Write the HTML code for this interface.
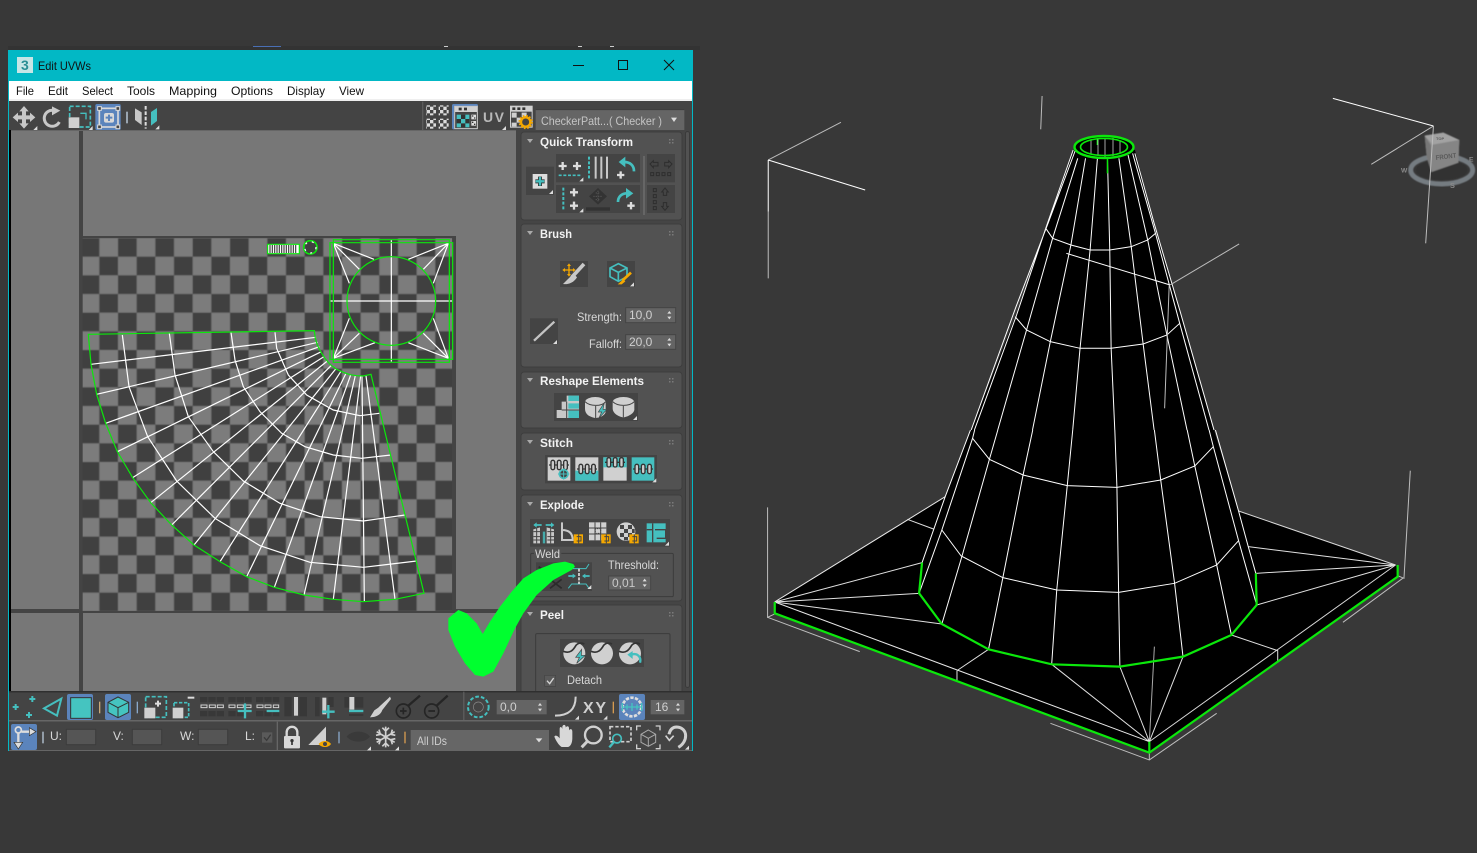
<!DOCTYPE html>
<html><head><meta charset="utf-8"><title>Edit UVWs</title>
<style>
html,body{margin:0;padding:0;background:#383838;width:1477px;height:853px;overflow:hidden}
svg{position:absolute;left:0;top:0;display:block}
text{font-family:"Liberation Sans",sans-serif;font-size:12px}
.w{fill:#f2f2f2;font-weight:bold}
.l{fill:#d8d8d8}
.v *{vector-effect:non-scaling-stroke}
</style></head><body>
<svg width="1477" height="853" viewBox="0 0 1477 853" xmlns="http://www.w3.org/2000/svg">
<defs>
<filter id="soft" x="-5%" y="-5%" width="110%" height="110%"><feGaussianBlur stdDeviation=".45"/></filter>
<filter id="soft2" x="-5%" y="-5%" width="110%" height="110%"><feGaussianBlur stdDeviation="1.800"/></filter>
<clipPath id="cc"><rect x="82.670" y="238" width="369.400" height="373"/></clipPath>
<pattern id="chk" x="80.67" y="238" width="37.33" height="37.33" patternUnits="userSpaceOnUse">
<rect width="37.33" height="37.33" fill="#7c7c7c"/><rect width="18.67" height="18.67" fill="#3f3f3f"/><rect x="18.67" y="18.67" width="18.67" height="18.67" fill="#3f3f3f"/>
</pattern>
<pattern id="mini" width="20" height="20" patternUnits="userSpaceOnUse">
<rect width="10" height="10" fill="#ddd"/><rect x="10" y="10" width="10" height="10" fill="#ddd"/>
</pattern>
<polygon id="t" points="0,12 12,12 12,0" fill="#ddd"/>
<g id="chain" fill="none" stroke="#333" stroke-width="4"><path d="M0 30H60"/><rect x="6" y="16" width="11" height="28" rx="5" fill="#ccc"/><rect x="25" y="16" width="11" height="28" rx="5" fill="#ccc"/><rect x="44" y="16" width="11" height="28" rx="5" fill="#ccc"/></g>
</defs>

<!-- top strip -->
<rect x="8" y="46" width="692" height="4" fill="#333"/>
<rect x="253" y="46" width="28" height="1" fill="#4a6fb5"/>
<rect x="444" y="46" width="4" height="1" fill="#ccc"/><rect x="578" y="46" width="4" height="1" fill="#ccc"/><rect x="610" y="46" width="4" height="1" fill="#ccc"/>

<!-- viewcube -->
<g transform="translate(1400 120) scale(.33333)">
<g filter="url(#soft2)">
<ellipse cx="125" cy="150" rx="93" ry="42" fill="none" stroke="#757b81" stroke-width="15"/>
<ellipse cx="125" cy="150" rx="78" ry="30" fill="#333"/>
<polygon points="74,47 130,38 178,60 175,128 94,156 80,110" fill="#8f8f8f"/>
<polygon points="74,47 130,38 178,60 100,75" fill="#a2a2a2"/>
<polygon points="92,75 178,60 175,128 94,156" fill="#858585"/>
<polygon points="74,47 92,75 94,156 80,110" fill="#777"/>
</g>
<text x="108" y="120" style="font-size:20px;font-weight:bold" fill="#5a5a5a" textLength="62" lengthAdjust="spacingAndGlyphs" transform="rotate(-7 108 120)">FRONT</text>
<text x="108" y="60" style="font-size:12px;font-weight:bold" fill="#5a5a5a">TOP</text>
<text x="3" y="158" style="font-size:20px;font-weight:bold" fill="#8a8a8a">W</text>
<text x="207" y="124" style="font-size:20px;font-weight:bold" fill="#8a8a8a">E</text>
<text x="150" y="204" style="font-size:22px;font-weight:bold" fill="#8a8a8a">S</text>
</g>

<!-- 3D viewport -->
<polygon points="775,602 945,497 973,425 1015,317 1046,228 1073,150 1135,150 1154,223 1180,310 1214,430 1239,511 1396,565 1398,577 1149,753 775,613" fill="#000"/>
<ellipse cx="1104" cy="147" rx="29.500" ry="11" fill="#000"/>
<g class="v" transform="translate(760 430) scale(.4209 .3333)" fill="none" stroke="#fff" stroke-width="1">
<path d="M35 516L925 935M35 516L440 200" stroke="#e8e8e8"/>
<path d="M925 935L1510 405M1137 243L1510 405" stroke="#d8d8d8"/>
<path d="M18 232V562L35 552M18 562L237 665M690 880L925 990L1085 850M925 990V968M1527 445L1385 577M1545 122L1530 445L1515 437" stroke="#bdbdbd"/>
<path d="M937 650L925 935" stroke="#aaa"/>
<path d="M35 516L385 398M35 516L378 490M35 516L432 582M1510 405L1160 350M1510 405L1178 430M1510 405L1180 525M925 935L693 703M925 935L855 710M925 935L1005 680M350 268L412 297M468 722L543 658M468 722V755M1120 615L1230 662V695" stroke="#e0e0e0"/>
<path d="M505 25L545 88L625 135L730 167L848 172L952 150L1033 108L1077 50M432 300L478 378L577 443L705 480L852 487L985 460L1085 405L1137 332"/>
<path d="M378 490L432 300L505 25L510 0M432 582L480 378L545 88L565 0M543 658L577 443L625 135L648 0M693 703L705 480L730 167L743 0M855 710L852 487L848 172L843 0M1005 680L985 460L952 150L937 0M1120 615L1085 405L1033 108L1015 0M1180 525L1137 332L1077 50L1067 0M385 398L440 200L500 0M1178 430L1160 350L1137 243L1082 0"/>
<path d="M35 516V550L925 968L1515 440V405M925 935V968M385 398L378 490L432 582L543 658L693 703L855 710L1005 680L1120 615L1180 525L1178 430" stroke="#0be80b" stroke-width="2.200"/>
</g>
<g class="v" transform="translate(760 90) scale(.4572 .3333)" fill="none" stroke="#fff" stroke-width="1">
<path d="M462 1020L560 650L630 400L690 180M469 1020L560 680L625 415L685 180M520 1020L583 720L640 445L695 205M596 1020L635 755L680 465L712 205M684 1020L700 775L722 480L738 205M776 1020L768 775L765 480L760 205M862 1020L838 762L812 470L785 205M934 1020L890 735L848 450L805 195M982 1020L918 700L865 430L815 190M993 1020L918 660L862 400L820 190"/>
<path d="M625 415L640 445L680 465L722 480L765 480L812 470L848 450L865 430M558 680L583 720L635 755L700 775L768 775L838 762L890 735L918 700M670 490L897 585"/>
<path d="M897 585L1048 462M895 585L885 955M617 18L614 118M18 210L177 97M18 365V565M1473 108L1337 223M1473 108L1456 460" stroke="#bcbcbc"/>
<path d="M18 210L230 300M18 210V365M1253 25L1473 108"/>
<path d="M760 205V250M738 145V165" stroke="#0be80b" stroke-width="1.500"/>
</g>
<path d="M1091 140V154M1098 138V156M1105 138V157M1113 138V156M1120 141V153" stroke="#fff" stroke-width=".8" opacity=".8"/>
<ellipse cx="1104" cy="147" rx="29.500" ry="11" fill="none" stroke="#0be80b" stroke-width="2.400"/>
<ellipse cx="1104" cy="147" rx="23.500" ry="8.500" fill="none" stroke="#0be80b" stroke-width="1.600"/>

<!-- window -->
<rect x="8" y="50" width="685" height="701" fill="#464646"/>
<rect x="8" y="50" width="685" height="31" fill="#02b8c5"/>
<rect x="8" y="81" width="684" height="20" fill="#fff"/>
<rect x="9" y="99" width="683" height="2" fill="#efefef"/>
<rect x="17" y="57" width="16" height="16" fill="#c8e6e6"/>
<text x="21" y="70" style="font-size:14px;font-weight:bold" fill="#2a8f94">3</text>
<text x="38" y="70" fill="#111" textLength="53" lengthAdjust="spacingAndGlyphs">Edit UVWs</text>
<path d="M573 65.500H584" stroke="#111"/>
<rect x="618.500" y="60.500" width="9" height="9" fill="none" stroke="#111"/>
<path d="M664 60L674 70M674 60L664 70" stroke="#111"/>
<g fill="#111">
<text x="16" y="95" textLength="18" lengthAdjust="spacingAndGlyphs">File</text>
<text x="48" y="95" textLength="20" lengthAdjust="spacingAndGlyphs">Edit</text>
<text x="82" y="95" textLength="31" lengthAdjust="spacingAndGlyphs">Select</text>
<text x="127" y="95" textLength="28" lengthAdjust="spacingAndGlyphs">Tools</text>
<text x="169" y="95" textLength="48" lengthAdjust="spacingAndGlyphs">Mapping</text>
<text x="231" y="95" textLength="42" lengthAdjust="spacingAndGlyphs">Options</text>
<text x="287" y="95" textLength="38" lengthAdjust="spacingAndGlyphs">Display</text>
<text x="339" y="95" textLength="25" lengthAdjust="spacingAndGlyphs">View</text>
</g>

<!-- canvas -->
<rect x="9" y="130" width="508" height="561" fill="#777"/>
<rect x="9" y="130" width="2" height="561" fill="#000"/>
<rect x="79" y="130" width="4" height="561" fill="#444"/>
<rect x="11" y="130" width="506" height="1" fill="#666"/>
<rect x="83" y="236" width="373" height="3" fill="#444"/>
<rect x="11" y="609" width="506" height="4" fill="#444"/>
<rect x="80" y="236" width="376" height="377" fill="#444"/>
<g clip-path="url(#cc)"><rect x="80" y="236" width="374" height="377" fill="url(#chk)" filter="url(#soft)"/></g>

<!-- uv shells -->
<g class="v" transform="translate(80 235) scale(.33333)" fill="none" stroke="#fff" stroke-width="1.200">
<path d="M33 388L708 307M50 478L713 322M77 565L718 335M112 650L724 350M158 728L732 365M212 803L742 378M275 870L753 392M342 930L767 402M420 980L782 410M500 1025L797 417M583 1057L812 420M672 1080L826 422M760 1093L842 422M853 1098L846 422M945 1093L858 422"/>
<path d="M585 292L590 340L625 420L680 480L760 525L840 542L898 535M453 292L465 375L490 455L540 530L605 595L675 635L760 660L845 670L933 660M268 295L285 420L325 545L400 650L490 738L600 805L720 845L850 858L975 840M127 300L147 455L203 605L290 738L405 850L540 932L690 982L850 997L1010 978"/>
<path d="M934 14V380M750 198H1118M760 25L882 73M760 25L838 103M760 25L808 145M1105 25L985 73M1105 25L1030 103M1105 25L1060 145M760 370L808 250M760 370L838 295M760 370L885 323M1105 370L1060 250M1105 370L1030 295M1105 370L985 323"/>
<path d="M25 298L703 287L706 310L712 330L722 350L735 370L750 388L770 403L790 412L810 419L830 422L850 423L873 418L1032 1075L945 1093L850 1100L760 1093L672 1080L583 1057L500 1025L420 980L342 930L275 870L212 803L158 728L112 650L77 565L50 478L33 388Z" stroke="#0be80b"/>
<rect x="760" y="14" width="348" height="368" stroke="#0be80b"/>
<rect x="750" y="23" width="368" height="350" stroke="#0be80b"/>
<circle cx="934" cy="198" r="133" stroke="#0be80b"/>
<rect x="563" y="28" width="95" height="28" fill="#fff" stroke="#0be80b"/>
<path d="M570 30V54M577 30V54M584 30V54M591 30V54M598 30V54M605 30V54M612 30V54M619 30V54M626 30V54M633 30V54M640 30V54M647 30V54" stroke="#444" stroke-width="1.200"/>
<circle cx="691" cy="37" r="20" stroke="#0be80b" stroke-width="1.600"/>
<circle cx="691" cy="37" r="17" stroke="#fff" stroke-dasharray="2 5"/>
</g>

<!-- top toolbar -->
<rect x="9" y="101" width="683" height="29" fill="#444"/>
<g transform="translate(0 40) scale(.33333)">
<path d="M72 198L86 214H78V226H90V218L106 232L90 246V238H78V250H86L72 266L58 250H66V238H54V246L38 232L54 218V226H66V214H58Z" fill="#c8c8c8"/>
<use href="#t" x="100" y="258"/>
<path d="M178 246A24 24 0 1 1 160 211" fill="none" stroke="#c8c8c8" stroke-width="9"/>
<polygon points="156,199 156,226 181,212" fill="#c8c8c8"/>
<rect x="209" y="199" width="62" height="62" fill="none" stroke="#45bfbf" stroke-width="5" stroke-dasharray="12 6"/>
<rect x="206" y="232" width="32" height="32" fill="#d0d0d0"/>
<path d="M241 220H258V238" fill="none" stroke="#45bfbf" stroke-width="4"/>
<use href="#t" x="266" y="258"/>
<rect x="286" y="192" width="76" height="78" rx="5" fill="#5b84bc"/>
<rect x="298" y="205" width="56" height="56" fill="none" stroke="#d8d8d8" stroke-width="5"/>
<g fill="#444" stroke="#d8d8d8" stroke-width="3"><rect x="293" y="200" width="11" height="11"/><rect x="348" y="200" width="11" height="11"/><rect x="293" y="255" width="11" height="11"/><rect x="348" y="255" width="11" height="11"/></g>
<rect x="312" y="219" width="30" height="29" rx="6" fill="#d8d8d8"/>
<path d="M327 224V243M317 233H337" stroke="#5b84bc" stroke-width="6"/>
<rect x="378" y="215" width="6" height="35" fill="#9aa5b0"/>
<polygon points="405,205 425,217 425,255 405,240" fill="#c8c8c8"/>
<polygon points="453,216 471,204 471,243 453,257" fill="#45bfbf"/>
<path d="M437 198V266" stroke="#ddd" stroke-width="6" stroke-dasharray="11 5"/>
<use href="#t" x="466" y="256"/>
</g>
<g transform="translate(350 40) scale(.33333)">
<rect x="216" y="185" width="4" height="85" fill="#5c5c5c"/>
<g fill="url(#mini)"><rect x="228" y="196" width="30" height="30"/><rect x="266" y="196" width="30" height="30"/><rect x="228" y="236" width="30" height="30"/><rect x="266" y="236" width="30" height="30"/></g>
<rect x="306" y="192" width="78" height="76" rx="5" fill="#5b84bc"/>
<rect x="312" y="198" width="72" height="70" fill="#444"/>
<rect x="314" y="199" width="68" height="67" fill="none" stroke="#d0d0d0" stroke-width="3"/>
<rect x="315" y="200" width="66" height="16" fill="#d0d0d0"/>
<path d="M326 203h9v8h-9zM342 203h9v8h-9z" fill="#333"/>
<rect x="320" y="224" width="38" height="38" fill="#45bfbf"/>
<path d="M333 224h13v13h-13zM320 237h13v13h-13zM346 237h12v13h-12zM333 250h13v12h-13z" fill="#333"/>
<rect x="364" y="224" width="14" height="14" fill="#ddd"/><rect x="364" y="243" width="14" height="14" fill="#ddd"/>
<path d="M366 226h4v4h-4zM372 232h4v4h-4zM366 245h4v4h-4zM372 251h4v4h-4z" fill="#333"/>
<use href="#t" x="456" y="258"/>
<rect x="480" y="197" width="68" height="66" fill="#d0d0d0"/><rect x="483" y="215" width="62" height="45" fill="#444"/>
<path d="M487 202h9v8h-9zM502 202h9v8h-9zM517 202h9v8h-9z" fill="#333"/>
<path d="M485 218h15v15h-15zM515 218h15v13h-15zM500 233h15v15h-15zM485 248h15v12h-15z" fill="#d0d0d0"/>
<circle cx="527" cy="246" r="14" fill="none" stroke="#f5a800" stroke-width="7"/>
<circle cx="527" cy="246" r="19" fill="none" stroke="#f5a800" stroke-width="5" stroke-dasharray="5 5"/>
<rect x="557" y="209" width="446" height="61" fill="#656565"/>
<path d="M557 209H1003" stroke="#3e3e3e" stroke-width="3"/>
<polygon points="963,233 981,233 972,246" fill="#ddd"/>
</g>
<text x="483" y="122" style="font-size:14px;font-weight:bold" fill="#b8b8b8" textLength="21">UV</text>
<text x="541" y="125" fill="#c4c4c4" textLength="121" lengthAdjust="spacingAndGlyphs">CheckerPatt...( Checker )</text>

<!-- command panel -->
<rect x="516" y="130" width="176" height="561" fill="#454545"/>
<rect x="685.500" y="131.500" width="4" height="556" rx="2" fill="#525252" stroke="#3a3a3a"/>
<g fill="#525252" stroke="#3d3d3d">
<rect x="521" y="132" width="161" height="88" rx="3"/>
<rect x="521" y="224" width="161" height="143" rx="3"/>
<rect x="521" y="372" width="161" height="56" rx="3"/>
<rect x="521" y="433" width="161" height="57" rx="3"/>
<rect x="521" y="495" width="161" height="106" rx="3"/>
<rect x="521" y="605" width="161" height="95" rx="3"/>
</g>
<g fill="#aaa">
<polygon points="527,139 533,139 530,143"/><polygon points="527,231 533,231 530,235"/><polygon points="527,378 533,378 530,382"/><polygon points="527,440 533,440 530,444"/><polygon points="527,502 533,502 530,506"/><polygon points="527,612 533,612 530,616"/>
</g>
<g fill="#7a7a7a">
<path d="M669 139h1.500v1.500H669zM672 139h1.500v1.500H672zM669 142h1.500v1.500H669zM672 142h1.500v1.500H672z"/>
<path d="M669 231h1.500v1.500H669zM672 231h1.500v1.500H672zM669 234h1.500v1.500H669zM672 234h1.500v1.500H672z"/>
<path d="M669 378h1.500v1.500H669zM672 378h1.500v1.500H672zM669 381h1.500v1.500H669zM672 381h1.500v1.500H672z"/>
<path d="M669 440h1.500v1.500H669zM672 440h1.500v1.500H672zM669 443h1.500v1.500H669zM672 443h1.500v1.500H672z"/>
<path d="M669 502h1.500v1.500H669zM672 502h1.500v1.500H672zM669 505h1.500v1.500H669zM672 505h1.500v1.500H672z"/>
<path d="M669 612h1.500v1.500H669zM672 612h1.500v1.500H672zM669 615h1.500v1.500H669zM672 615h1.500v1.500H672z"/>
</g>
<text class="w" x="540" y="146" textLength="93" lengthAdjust="spacingAndGlyphs">Quick Transform</text>
<text class="w" x="540" y="238" textLength="32" lengthAdjust="spacingAndGlyphs">Brush</text>
<text class="w" x="540" y="385" textLength="104" lengthAdjust="spacingAndGlyphs">Reshape Elements</text>
<text class="w" x="540" y="447" textLength="33" lengthAdjust="spacingAndGlyphs">Stitch</text>
<text class="w" x="540" y="509" textLength="44" lengthAdjust="spacingAndGlyphs">Explode</text>
<text class="w" x="540" y="619" textLength="24" lengthAdjust="spacingAndGlyphs">Peel</text>

<!-- Quick transform icons -->
<g transform="translate(350 40) scale(.33333)">
<g fill="#444"><rect x="528" y="380" width="84" height="85"/><rect x="618" y="342" width="252" height="85"/><rect x="618" y="435" width="252" height="84"/><rect x="891" y="342" width="84" height="85"/><rect x="891" y="435" width="84" height="84"/></g>
<rect x="879" y="348" width="6" height="177" fill="#666"/>
<rect x="548" y="402" width="44" height="44" fill="#ddd"/>
<path d="M570 410V438M556 424H584" stroke="#333" stroke-width="12"/><path d="M570 411V437M557 424H583" stroke="#45bfbf" stroke-width="7"/>
<use href="#t" x="597" y="450"/>
<path d="M638 366V390M626 378H650M681 366V390M669 378H693M672 445V469M660 457H684M672 485V509M660 497H684M812 394V416M801 405H823M843 486V508M832 497H854" stroke="#ddd" stroke-width="7"/>
<path d="M626 406H694" stroke="#45bfbf" stroke-width="5" stroke-dasharray="9 5"/>
<use href="#t" x="688" y="412"/>
<path d="M717 350V418" stroke="#45bfbf" stroke-width="6" stroke-dasharray="9 5"/>
<path d="M737 350V416M754 350V416M771 350V416" stroke="#c8c8c8" stroke-width="6"/>
<path d="M852 394C852 376 840 366 822 366" fill="none" stroke="#45bfbf" stroke-width="8"/><polygon points="826,350 826,382 806,366" fill="#45bfbf"/>
<path d="M640 443V510" stroke="#45bfbf" stroke-width="6" stroke-dasharray="9 5"/>
<use href="#t" x="688" y="505"/>
<polygon points="744,444 771,469 744,494 717,469" fill="#333"/>
<path d="M730 469h28M737 459h14M737 479h14M744 452v34" stroke="#555" stroke-width="3" stroke-dasharray="4 3"/>
<rect x="708" y="502" width="72" height="10" fill="#333"/>
<path d="M804 486C804 470 815 460 832 460" fill="none" stroke="#45bfbf" stroke-width="8"/><polygon points="828,444 828,476 850,460" fill="#45bfbf"/>
<g fill="none" stroke="#2e2e2e" stroke-width="3">
<path d="M900 372L910 362V367H924V378H910V383ZM966 372L956 362V367H944V378H956V383Z"/>
<path d="M902 398h9v9h-9zM919 398h9v9h-9zM936 398h9v9h-9zM953 398h9v9h-9zM910 446h9v9h-9zM910 464h9v9h-9zM910 482h9v9h-9zM910 500h9v9h-9z"/>
<path d="M945 444L955 456H950V466H940V456H935ZM945 511L955 499H950V488H940V499H935Z"/>
</g>
</g>

<!-- Brush / Reshape / Stitch icons -->
<g transform="translate(515 220) scale(.33333)">
<rect x="135" y="123" width="84" height="78" fill="#444"/><rect x="276" y="123" width="84" height="78" fill="#444"/>
<path d="M207 132L170 172" stroke="#c8c8c8" stroke-width="11"/><path d="M176 160L144 192C160 194 176 188 186 172Z" fill="#c8c8c8"/>
<path d="M162 134V166M146 150H178" stroke="#f5a800" stroke-width="4"/><path d="M162 130l6 8h-12zM162 170l6-8h-12zM142 150l8-6v12zM182 150l-8-6v12z" fill="#f5a800"/>
<path d="M310 131L336 144V170L310 184L285 170V144ZM285 144L310 157L336 144M310 157V184" fill="none" stroke="#45bfbf" stroke-width="5"/>
<path d="M348 158L322 182" stroke="#f5a800" stroke-width="8"/><path d="M325 178L308 193L320 193L331 184Z" fill="#f5a800"/>
<use href="#t" x="345" y="187"/>
<rect x="45" y="295" width="84" height="77" fill="#444"/>
<path d="M57 362L118 305" stroke="#c4c4c4" stroke-width="7"/>
<use href="#t" x="114" y="360"/>
<g fill="#646464" stroke="#454545" stroke-width="3"><rect x="332" y="263" width="150" height="45"/><rect x="332" y="344" width="150" height="44"/></g>
<path d="M457 281L463 273L469 281ZM457 290L463 298L469 290ZM457 362L463 354L469 362ZM457 371L463 379L469 371Z" fill="#ddd"/>
<rect x="117" y="519" width="252" height="84" fill="#444"/>
<polygon points="125,570 140,570 140,545 155,545 155,527 192,527 192,594 125,594" fill="#c8c8c8"/>
<path d="M160 527h32v16h-32zM160 550h32v16h-32zM160 572h32v22h-32z" fill="#45bfbf"/>
<path d="M140 570H192M155 545V594" stroke="#444" stroke-width="3"/>
<path d="M210 545C215 528 262 525 272 545V575C270 590 245 595 240 594C225 590 210 585 210 565Z" fill="#d0d0d0"/>
<path d="M210 545C225 560 260 560 272 545M242 558V594" fill="none" stroke="#444" stroke-width="3"/>
<polygon points="268,548 250,576 260,576 252,594 276,568 264,568" fill="#45bfbf" stroke="#444" stroke-width="2"/>
<path d="M293 545C298 528 348 525 358 545V570C355 585 330 592 325 592C310 590 293 580 293 565Z" fill="#d0d0d0"/>
<path d="M293 545C308 560 343 560 358 545M325 558V592" fill="none" stroke="#444" stroke-width="3"/>
<use href="#t" x="354" y="588"/>
<rect x="90" y="705" width="336" height="85" fill="#444"/>
<rect x="98" y="712" width="68" height="70" fill="#d0d0d0"/>
<rect x="181" y="712" width="69" height="70" fill="#d0d0d0"/><rect x="181" y="752" width="69" height="30" fill="#45bfbf"/>
<rect x="265" y="712" width="70" height="70" fill="#d0d0d0"/><rect x="265" y="712" width="70" height="30" fill="#45bfbf"/>
<rect x="350" y="712" width="68" height="70" fill="#45bfbf"/>
<use href="#chain" x="102" y="705"/><use href="#chain" x="186" y="717"/><use href="#chain" x="270" y="697"/><use href="#chain" x="354" y="717"/>
<circle cx="146" cy="762" r="13" fill="#444" stroke="#45bfbf" stroke-width="5"/><path d="M146 745V779M129 762H163" stroke="#45bfbf" stroke-width="3"/>
<use href="#t" x="412" y="775"/>
</g>
<text class="l" x="577" y="321" textLength="45" lengthAdjust="spacingAndGlyphs">Strength:</text>
<text class="l" x="589" y="348" textLength="33" lengthAdjust="spacingAndGlyphs">Falloff:</text>
<text x="629" y="319" fill="#cfcfcf">10,0</text>
<text x="629" y="346" fill="#cfcfcf">20,0</text>

<!-- Explode / Weld / Peel icons -->
<g transform="translate(440 490) scale(.33333)">
<rect x="270" y="87" width="420" height="83" fill="#444"/>
<path d="M280 160V118L300 112V160ZM342 160V118L320 112V160Z" fill="#c8c8c8"/>
<path d="M280 125h20M280 140h20M280 150h20M322 125h20M322 140h20M322 150h20M290 112V160M332 112V160" stroke="#444" stroke-width="3"/>
<path d="M305 105H283M317 105H340" stroke="#45bfbf" stroke-width="5"/><path d="M280 105l10-8v16zM343 105l-10-8v16z" fill="#45bfbf"/>
<path d="M310 160V125M314 160V125" stroke="#45bfbf" stroke-width="3"/>
<path d="M366 97V150H398C398 128 385 120 366 120" fill="none" stroke="#c8c8c8" stroke-width="6"/>
<rect x="401" y="133" width="28" height="27" fill="#f5a800"/><path d="M410 140h13v13h-13M416 133v27" fill="none" stroke="#444" stroke-width="3"/>
<rect x="447" y="97" width="52" height="54" fill="#d0d0d0"/>
<path d="M447 114h52M447 132h52M465 97v54M482 97v54" stroke="#444" stroke-width="3"/>
<path d="M466 116h16v14h-16z" fill="none" stroke="#444" stroke-width="3" stroke-dasharray="3 2"/>
<rect x="484" y="133" width="28" height="27" fill="#f5a800"/><path d="M493 140h13v13h-13M499 133v27" fill="none" stroke="#444" stroke-width="3"/>
<circle cx="558" cy="125" r="28" fill="#d0d0d0"/>
<path d="M540 105h12v12h-12zM564 105h12v12h-12zM552 117h12v12h-12zM576 117h8v12h-8zM540 129h12v12h-12zM564 129h12v12h-12zM552 141h12v10h-12z" fill="#444"/>
<rect x="568" y="133" width="28" height="27" fill="#f5a800"/><path d="M577 140h13v13h-13M583 133v27" fill="none" stroke="#444" stroke-width="3"/>
<rect x="620" y="100" width="57" height="57" fill="#45bfbf"/>
<path d="M620 119h18V157M638 119V100M645 119H677V145H650" fill="none" stroke="#444" stroke-width="4"/>
<use href="#t" x="675" y="155"/>
<rect x="272" y="190" width="428" height="130" rx="4" fill="none" stroke="#3c3c3c" stroke-width="3"/>
<rect x="282" y="180" width="82" height="20" fill="#525252"/>
<rect x="288" y="217" width="168" height="86" fill="#444"/>
<path d="M296 230L340 260M340 230L296 260M330 268L365 295M365 268L330 295" stroke="#2b2b2b" stroke-width="5"/>
<path d="M385 222L395 236H438L447 222M385 295L395 282H438L447 295" fill="none" stroke="#45bfbf" stroke-width="3"/>
<path d="M385 258H402M449 258H432" stroke="#45bfbf" stroke-width="5"/><path d="M408 258l-10-7v14zM426 258l10-7v14z" fill="#45bfbf"/>
<path d="M417 236V282" stroke="#ddd" stroke-width="5" stroke-dasharray="9 4"/>
<use href="#t" x="442" y="285"/>
<rect x="506" y="258" width="126" height="42" fill="#646464" stroke="#454545" stroke-width="3"/>
<path d="M608 274L614 266L620 274ZM608 283L614 291L620 283Z" fill="#ddd"/>
<rect x="287" y="431" width="403" height="200" rx="4" fill="none" stroke="#3c3c3c" stroke-width="3"/>
<rect x="360" y="447" width="252" height="84" fill="#444"/>
<g fill="#d0d0d0"><circle cx="403" cy="490" r="33"/><circle cx="486" cy="490" r="33"/><circle cx="570" cy="490" r="33"/></g>
<path d="M370 484C390 492 400 480 408 466C415 458 425 458 433 462M453 484C473 492 483 480 491 466C498 458 508 458 516 462M537 484C557 492 567 480 575 466C582 458 592 458 600 462" fill="none" stroke="#333" stroke-width="5"/>
<polygon points="425,478 407,502 418,502 410,520 436,496 424,496" fill="#45bfbf" stroke="#444" stroke-width="2"/>
<path d="M600 518C605 500 590 488 575 494" fill="none" stroke="#45bfbf" stroke-width="7"/><polygon points="578,483 578,507 562,494" fill="#45bfbf"/>
<rect x="314" y="556" width="33" height="33" fill="#5a5a5a" stroke="#444" stroke-width="2"/>
<path d="M321 572L329 581L341 564" fill="none" stroke="#d5d5d5" stroke-width="4"/>
</g>
<text x="535" y="558" class="l" textLength="25" lengthAdjust="spacingAndGlyphs">Weld</text>
<text x="608" y="569" class="l" textLength="51" lengthAdjust="spacingAndGlyphs">Threshold:</text>
<text x="612" y="587" fill="#c8c8c8">0,01</text>
<text x="567" y="684" class="l" textLength="35" lengthAdjust="spacingAndGlyphs">Detach</text>

<!-- Bottom toolbars -->
<rect x="9" y="691" width="683" height="60" fill="#444"/>
<rect x="9" y="691" width="683" height="1.500" fill="#2f2f2f"/>
<rect x="9" y="720" width="683" height="1.500" fill="#666"/>
<rect x="9" y="750" width="684" height="1" fill="#666"/>
<rect x="692" y="50" width="1" height="701" fill="#02b8c5"/>
<rect x="8" y="50" width="1" height="701" fill="#02b8c5"/>
<g transform="translate(0 685) scale(.33333)">
<path d="M97 33V51M88 42H106M47 57V75M38 66H56M87 81V99M78 90H96" stroke="#45bfbf" stroke-width="6"/>
<polygon points="184,41 132,70 171,92" fill="none" stroke="#45bfbf" stroke-width="6"/>
<rect x="201" y="27" width="78" height="78" rx="6" fill="#5b84bc"/>
<rect x="212" y="38" width="62" height="62" fill="#45c4c0" stroke="#333" stroke-width="3"/>
<rect x="297" y="50" width="4" height="35" fill="#c9a878"/>
<rect x="315" y="27" width="78" height="78" rx="6" fill="#5b84bc"/>
<path d="M354 36L386 52V82L354 98L324 82V52Z" fill="#45c4c0" stroke="#333" stroke-width="3"/>
<path d="M324 52L354 68L386 52M354 68V98" fill="none" stroke="#333" stroke-width="3"/>
<rect x="410" y="50" width="4" height="35" fill="#8aa8c8"/>
<rect x="437" y="35" width="62" height="62" fill="none" stroke="#45bfbf" stroke-width="5" stroke-dasharray="12 6"/>
<rect x="433" y="68" width="33" height="32" fill="#d0d0d0"/>
<path d="M474 47V65M465 56H483" stroke="#ddd" stroke-width="6"/>
<rect x="522" y="53" width="44" height="44" fill="none" stroke="#45bfbf" stroke-width="5" stroke-dasharray="10 5"/>
<rect x="518" y="68" width="32" height="32" fill="#d0d0d0"/>
<path d="M563 38H583" stroke="#ddd" stroke-width="6"/>
<g fill="#383838">
<path d="M600 36h22v16h-22zM625 36h22v16h-22zM650 36h22v16h-22zM600 78h22v16h-22zM625 78h22v16h-22zM650 78h22v16h-22z"/>
<path d="M685 36h22v16h-22zM710 36h22v16h-22zM735 36h20v16h-20zM685 78h22v16h-22zM710 78h22v16h-22z"/>
<path d="M768 36h22v16h-22zM793 36h22v16h-22zM818 36h20v16h-20zM768 78h22v16h-22zM793 78h22v16h-22zM818 78h20v16h-20z"/>
<path d="M853 36h22v58h-22zM898 36h23v58h-23z"/>
<path d="M945 36h14v58h-14zM985 36h16v30h-16z"/>
</g>
<g fill="none" stroke="#d0d0d0" stroke-width="3">
<path d="M603 60h18v8h-18zM628 60h18v8h-18zM652 60h18v8h-18zM687 60h18v8h-18zM712 60h18v8h-18zM737 60h16v8h-16zM771 60h18v8h-18zM795 60h18v8h-18zM820 60h16v8h-16z"/>
</g>
<path d="M735 55V100M713 78H755M800 78H838" stroke="#45bfbf" stroke-width="7"/>
<rect x="882" y="36" width="12" height="56" fill="#d0d0d0"/>
<rect x="967" y="38" width="12" height="50" fill="#d0d0d0"/>
<path d="M985 60V100M966 80H1004" stroke="#45bfbf" stroke-width="7"/>
<!-- row 2 left -->
<rect x="33" y="117" width="78" height="78" rx="6" fill="#5b84bc"/>
<circle cx="55" cy="135" r="9" fill="none" stroke="#ddd" stroke-width="5"/>
<path d="M55 145V178M64 140H92" stroke="#ddd" stroke-width="7"/>
<path d="M88 128L108 140L88 152ZM42 172L55 192L68 172Z" fill="#ddd" stroke="#333" stroke-width="2"/>
<rect x="127" y="140" width="4" height="35" fill="#b8c8d8"/>
<g fill="#555" stroke="#3c3c3c" stroke-width="3"><rect x="199" y="133" width="88" height="46"/><rect x="397" y="133" width="88" height="46"/><rect x="595" y="133" width="88" height="46"/></g>
<rect x="785" y="141" width="33" height="33" fill="#5a5a5a" stroke="#444" stroke-width="2"/>
<path d="M792 157L800 166L812 149" fill="none" stroke="#3a3a3a" stroke-width="4"/>
<rect x="830" y="110" width="4" height="85" fill="#666"/>
<rect x="852" y="153" width="48" height="37" rx="3" fill="#d8d8d8"/>
<path d="M860 153V142C860 120 892 120 892 142V153" fill="none" stroke="#d8d8d8" stroke-width="7"/>
<path d="M876 165V180" stroke="#333" stroke-width="5"/><circle cx="876" cy="167" r="5" fill="#333"/>
<polygon points="925,180 978,125 978,180" fill="#d0d0d0"/>
<path d="M956 177C965 165 985 165 993 177C985 189 965 189 956 177Z" fill="#f5a800"/><circle cx="975" cy="177" r="6" fill="#444"/>
<rect x="1015" y="140" width="4" height="35" fill="#8aa8c8"/>
</g>
<text x="50" y="740" class="l">U:</text>
<text x="113" y="740" class="l">V:</text>
<text x="180" y="740" class="l">W:</text>
<text x="245" y="740" class="l">L:</text>
<g transform="translate(345 685) scale(.33333)">
<path d="M-2 36h15v32h-15zM28 36h27v32h-27z" fill="#383838"/>
<rect x="13" y="36" width="15" height="38" fill="#d0d0d0"/>
<path d="M12 78H55" stroke="#45bfbf" stroke-width="7"/>
<path d="M12 90H55" stroke="#383838" stroke-width="6"/>
<path d="M135 35C122 48 110 58 100 68L88 76L75 97C95 97 108 88 112 75L138 42Z" fill="#d0d0d0"/>
<g fill="none" stroke="#252525" stroke-width="5"><circle cx="175" cy="78" r="21"/><circle cx="260" cy="78" r="21"/><path d="M165 78H185M175 68V88M250 78H270"/></g>
<path d="M190 62L225 32M275 62L308 32" stroke="#252525" stroke-width="7"/>
<rect x="355" y="20" width="3" height="85" fill="#666"/>
<circle cx="400" cy="66" r="31" fill="none" stroke="#45bfbf" stroke-width="6" stroke-dasharray="11 6"/>
<circle cx="400" cy="66" r="15" fill="none" stroke="#888" stroke-width="2"/>
<rect x="455" y="45" width="150" height="43" fill="#646464"/>
<path d="M579 62L585 54L591 62ZM579 71L585 79L591 71Z" fill="#ddd"/>
<path d="M630 92C670 92 692 75 692 35" fill="none" stroke="#d0d0d0" stroke-width="6"/>
<use href="#t" x="690" y="92"/><use href="#t" x="775" y="92"/>
<rect x="803" y="50" width="4" height="35" fill="#d59a50"/>
<rect x="822" y="27" width="78" height="78" rx="6" fill="#5b84bc"/>
<circle cx="861" cy="66" r="28" fill="none" stroke="#ddd" stroke-width="8" stroke-dasharray="10 4"/>
<path d="M832 54V78M890 54V78M832 66H890M861 54V78M846 58V74M876 58V74" stroke="#45c4c0" stroke-width="4"/>
<rect x="917" y="45" width="101" height="43" fill="#646464"/>
<path d="M993 62L999 54L1005 62ZM993 71L999 79L1005 71Z" fill="#ddd"/>
<path d="M5 155C20 135 60 135 75 155C60 175 20 175 5 155Z" fill="#3a3a3a"/>
<use href="#t" x="66" y="184"/>
<path d="M122 125V187M95 140L149 172M149 140L95 172M112 128L122 138L132 128M112 184L122 174L132 184M93 151L106 148L102 134M151 161L138 164L142 178M151 151L138 148L142 134M93 161L106 164L102 178" fill="none" stroke="#d0d0d0" stroke-width="5"/>
<use href="#t" x="150" y="184"/>
<rect x="178" y="140" width="4" height="35" fill="#d59a50"/>
<rect x="197" y="135" width="415" height="60" fill="#666"/>
<polygon points="572,160 592,160 582,172" fill="#ddd"/>
<path d="M650 186C640 180 632 165 628 155C632 148 640 155 644 160V132C644 124 650 124 652 132V125C654 118 661 118 662 125V128C665 122 672 122 672 130V136C676 130 682 132 682 140V160C682 175 675 186 668 186Z" fill="#d8d8d8"/>
<circle cx="745" cy="150" r="25" fill="none" stroke="#d0d0d0" stroke-width="7"/>
<path d="M728 168L710 187" stroke="#d0d0d0" stroke-width="9"/>
<rect x="795" y="125" width="63" height="45" fill="none" stroke="#d0d0d0" stroke-width="5" stroke-dasharray="10 6"/>
<circle cx="816" cy="161" r="13" fill="#444" stroke="#45bfbf" stroke-width="5"/>
<path d="M806 172L793 187" stroke="#45bfbf" stroke-width="7"/>
<path d="M910 135L932 148V172L910 184L888 172V148ZM888 148L910 160L932 148M910 160V184" fill="none" stroke="#aaa" stroke-width="3"/>
<path d="M875 136V123H888M932 123H945V136M875 178V191H888M932 191H945V178" fill="none" stroke="#d0d0d0" stroke-width="4"/>
<path d="M1000 187C1030 170 1030 128 995 126C982 126 975 135 972 148" fill="none" stroke="#d0d0d0" stroke-width="9"/>
<path d="M962 152L973 166L986 152" fill="none" stroke="#d0d0d0" stroke-width="5"/>
<use href="#t" x="1020" y="182"/>
</g>
<text x="500" y="711" fill="#cfcfcf">0,0</text>
<text x="583" y="713" style="font-size:16px;font-weight:bold" fill="#cfcfcf" textLength="23">XY</text>
<text x="655" y="711" fill="#cfcfcf">16</text>
<text x="417" y="745" fill="#cfcfcf" textLength="30" lengthAdjust="spacingAndGlyphs">All IDs</text>

<!-- green tick -->
<g transform="translate(440 490) scale(.33333)">
<polygon points="405,230 400,222 375,215 340,220 290,240 250,265 215,305 180,350 150,395 128,432 110,400 80,370 55,360 25,385 25,420 45,470 75,520 105,555 130,560 160,545 190,490 225,415 250,370 290,315 340,270 395,240" fill="#00ff2f"/>
</g>
</svg>
</body></html>
